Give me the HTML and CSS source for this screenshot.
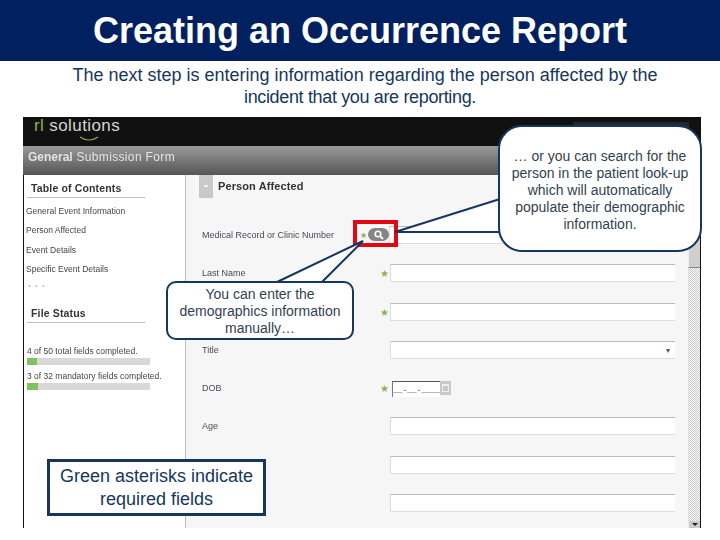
FILE: index.html
```html
<!DOCTYPE html>
<html lang="en">
<head>
<meta charset="utf-8">
<title>Creating an Occurrence Report</title>
<link rel="stylesheet" href="styles.css">
</head>
<body>
<div class="slide">
  <header class="banner"><h1>Creating an Occurrence Report</h1></header>
  <p class="intro"><span class="intro-first">The next step is entering information regarding the person affected by the</span><br><span class="intro-second">incident that you are reporting.</span></p>

  <section class="shot">
    <div class="topbar">
      <div class="logo">
        <span class="logo-text"><span class="logo-rl">rl</span> solutions</span>
        <svg class="logo-smile" width="20" height="6" viewBox="0 0 20 6"><path d="M1 1 Q10 7 19 1" fill="none" stroke="#8fb04a" stroke-width="1.2"/></svg>
      </div>
      <div class="topbar-box"></div>
    </div>
    <div class="titlebar"><span class="title-strong">General</span> Submission Form</div>
    <div class="workspace">
      <aside class="sidebar">
        <h2 class="side-title">Table of Contents</h2>
        <ul class="toc">
          <li>General Event Information</li>
          <li>Person Affected</li>
          <li>Event Details</li>
          <li>Specific Event Details</li>
        </ul>
        <div class="dots">• • •</div>
        <h2 class="side-title status-title">File Status</h2>
        <div class="progress">
          <div class="progress-label">4 of 50 total fields completed.</div>
          <div class="bar"><div class="bar-fill" style="width:10px"></div></div>
        </div>
        <div class="progress">
          <div class="progress-label">3 of 32 mandatory fields completed.</div>
          <div class="bar"><div class="bar-fill" style="width:11px"></div></div>
        </div>
      </aside>
      <main class="panel">
        <div class="panel-head">
          <span class="collapse">-</span>
          <h2 class="panel-title">Person Affected</h2>
        </div>
        <div class="row">
          <label class="label label-short">Medical Record or Clinic Number</label>
          <span class="star star-tight">★</span>
          <span class="lookup">
            <svg width="12" height="10" viewBox="0 0 12 10"><circle cx="5" cy="4" r="2.8" fill="none" stroke="#fff" stroke-width="1.6"/><path d="M7 6 L10 9" stroke="#fff" stroke-width="1.8"/></svg>
          </span>
          <span class="field"></span>
        </div>
        <div class="row"><label class="label">Last Name</label><span class="star">★</span><span class="field"></span></div>
        <div class="row"><label class="label"></label><span class="star">★</span><span class="field"></span></div>
        <div class="row"><label class="label">Title</label><span class="star"></span><span class="field field-select">▾</span></div>
        <div class="row">
          <label class="label">DOB</label><span class="star">★</span>
          <span class="date">__-__-____</span><span class="calendar"><span class="calendar-inner"></span></span>
        </div>
        <div class="row"><label class="label">Age</label><span class="star"></span><span class="field"></span></div>
        <div class="row"><label class="label"></label><span class="star"></span><span class="field"></span></div>
        <div class="row"><label class="label"></label><span class="star"></span><span class="field"></span></div>
      </main>
      <div class="scrollbar">
        <div class="thumb"></div>
        <div class="scroll-btn"></div>
      </div>
    </div>
  </section>

  <div class="highlight"></div>
  <svg class="tails" width="720" height="540" viewBox="0 0 720 540">
    <path d="M277 282 L363 241 L322 282" fill="#fff" stroke="#17365d" stroke-width="2"/>
    <path d="M500 199 L395 232 L500 232" fill="#fff" stroke="#17365d" stroke-width="2"/>
  </svg>
  <div class="callout callout-left">You can enter the demographics information manually…</div>
  <div class="callout callout-right">… or you can search for the person in the patient look-up which will automatically populate their demographic information.</div>
  <div class="note">Green asterisks indicate required fields</div>
</div>
</body>
</html>
```

FILE: styles.css
```css
* { box-sizing: border-box; }
html, body { margin: 0; padding: 0; background: #fff; }
body { font-family: "Liberation Sans", Arial, sans-serif; }
.slide { position: relative; width: 720px; height: 540px; overflow: hidden; }

.banner { height: 61px; background: #002060; display: flex; align-items: center; justify-content: center; }
.banner h1 { margin: 0; color: #fff; font-size: 36px; font-weight: 700; line-height: 1; }

.intro { margin: 3px 0 9px; text-align: center; font-size: 18px; line-height: 22px; color: #17365d; }
.intro-first { display: inline-block; padding-left: 10px; }
.intro-second { letter-spacing: -.35px; }

.shot { width: 678px; height: 411px; margin-left: 23px; display: flex; flex-direction: column; background: #fff; overflow: hidden; }

.topbar { height: 29px; background: #111; display: flex; justify-content: space-between; flex: none; }
.logo { margin-left: 12px; display: flex; flex-direction: column; align-items: center; width: 84px; }
.logo-text { font-size: 17px; line-height: 17px; color: #d4d4d4; letter-spacing: .4px; white-space: nowrap; }
.logo-rl { color: #8fb04a; }
.logo-smile { margin-top: 2px; margin-left: 24px; }
.topbar-box { width: 116px; height: 24px; margin: 5px 12px 0 0; background: #24272b; }

.titlebar { height: 29px; flex: none; padding: 4px 0 0 5px; font-size: 12px; line-height: 15px; font-weight: 400; letter-spacing: .35px; color: #e4e4e4; background: linear-gradient(#9a9a9a, #555); filter: blur(.3px); }
.title-strong { font-weight: 700; letter-spacing: 0; }

.workspace { flex: 1; display: flex; min-height: 0; border-left: 1px solid #111; border-right: 1px solid #111; }

.sidebar { width: 162px; flex: none; border-right: 1px solid #bdbdbd; padding: 7px 0 0 2px; filter: blur(.4px); color: #444; }
.side-title { margin: 0 0 0 1px; width: 118px; padding: 0 0 2px 4px; font-size: 10.5px; line-height: 13px; font-weight: 700; color: #333; border-bottom: 1px solid #bbb; letter-spacing: .15px; }
.toc { list-style: none; margin: 8px 0 0; padding: 0; font-size: 8.5px; line-height: 11px; }
.toc li { margin-bottom: 8.3px; }
.dots { margin-top: -1px; padding-left: 2px; font-size: 8px; line-height: 8px; letter-spacing: 1px; color: #c4c4c4; }
.status-title { margin-top: 17px; }
.progress { padding-left: 1px; margin-top: 6px; }
.status-title + .progress { margin-top: 23px; }
.progress-label { font-size: 8.5px; line-height: 10px; color: #444; white-space: nowrap; }
.bar { width: 123px; height: 7px; background: #d8d8d8; margin-top: 2px; }
.bar-fill { height: 7px; background: #7fc35f; }

.panel { flex: 1; background: #f6f6f6; padding: 0 13px 0 16px; min-width: 0; }
.panel-head { display: flex; height: 51px; margin-left: -3px; }
.collapse { width: 14px; height: 23px; background: #c9c9c9; color: #fff; font-size: 12px; font-weight: 700; line-height: 23px; text-align: center; }
.panel-title { margin: 5px 0 0 5px; font-size: 11px; line-height: 13px; font-weight: 700; color: #333; filter: blur(.3px); letter-spacing: .1px; }

.row { height: 18px; margin-bottom: 20.3px; display: flex; align-items: center; }
.label { width: 178px; flex: none; font-size: 9px; line-height: 12px; color: #4a4a5a; filter: blur(.4px); }
.label-short { width: 158px; }
.star { width: 10px; flex: none; font-family: "DejaVu Sans", sans-serif; font-size: 10px; line-height: 10px; color: #8db04f; margin-top: 2px; }
.star-tight { width: 8px; font-size: 8px; }
.field { flex: 1; height: 18px; background: #fff; border-top: 1px solid #bbb; border-bottom: 1px solid #ddd; border-left: 1px solid #ddd; text-align: right; }
.field-select { font-size: 8px; line-height: 17px; color: #555; padding-right: 5px; }
.lookup { width: 21px; height: 13px; flex: none; margin: 0 0 1px 0; border-radius: 7px; background: #858585; display: flex; align-items: center; justify-content: center; }
.date { width: 48px; height: 16px; flex: none; margin: 2px 0 0 2px; background: #fff; border-top: 1px solid #555; border-left: 1px solid #777; font-family: "Liberation Mono", monospace; font-size: 8px; line-height: 15px; color: #333; overflow: hidden; white-space: nowrap; letter-spacing: -.1px; }
.calendar { width: 11px; height: 14px; flex: none; background: #c8c8c8; display: flex; align-items: center; justify-content: center; }
.calendar-inner { width: 7px; height: 8px; border: 1px solid #eee; border-top-width: 2px; }

.scrollbar { width: 12px; flex: none; display: flex; flex-direction: column; justify-content: space-between; background-color: #fff; background-image: conic-gradient(#c6c6c6 25%, #fff 0 50%, #c6c6c6 0 75%, #fff 0); background-size: 2px 2px; }
.thumb { height: 93px; background: #cfcfcf; border-left: 1px solid #eee; border-bottom: 1px solid #888; }
.scroll-btn { height: 7px; background: #ccc; border-left: 1px solid #eee; display: flex; justify-content: center; align-items: center; }
.scroll-btn::after { content: ""; border-left: 3px solid transparent; border-right: 3px solid transparent; border-top: 3px solid #222; }

.highlight { position: absolute; left: 353px; top: 220px; width: 45px; height: 27px; border: 4px solid #e30613; }
.tails { position: absolute; left: 0; top: 0; }
.callout { position: absolute; display: flex; align-items: center; justify-content: center; text-align: center; background: #fff; border: 2px solid #17365d; font-size: 14px; line-height: 17px; color: #333f50; }
.callout-left { left: 166px; top: 281px; width: 188px; height: 59px; border-radius: 10px; padding: 2px 8px 0; }
.callout-right { left: 498px; top: 125px; width: 204px; height: 127px; border-radius: 24px; padding: 4px 8px 0; }
.note { position: absolute; left: 47px; top: 459px; width: 219px; height: 57px; display: flex; align-items: center; justify-content: center; text-align: center; background: #fff; border: 3px solid #17365d; font-size: 18px; line-height: 23px; color: #17365d; padding: 0 8px; }
```
